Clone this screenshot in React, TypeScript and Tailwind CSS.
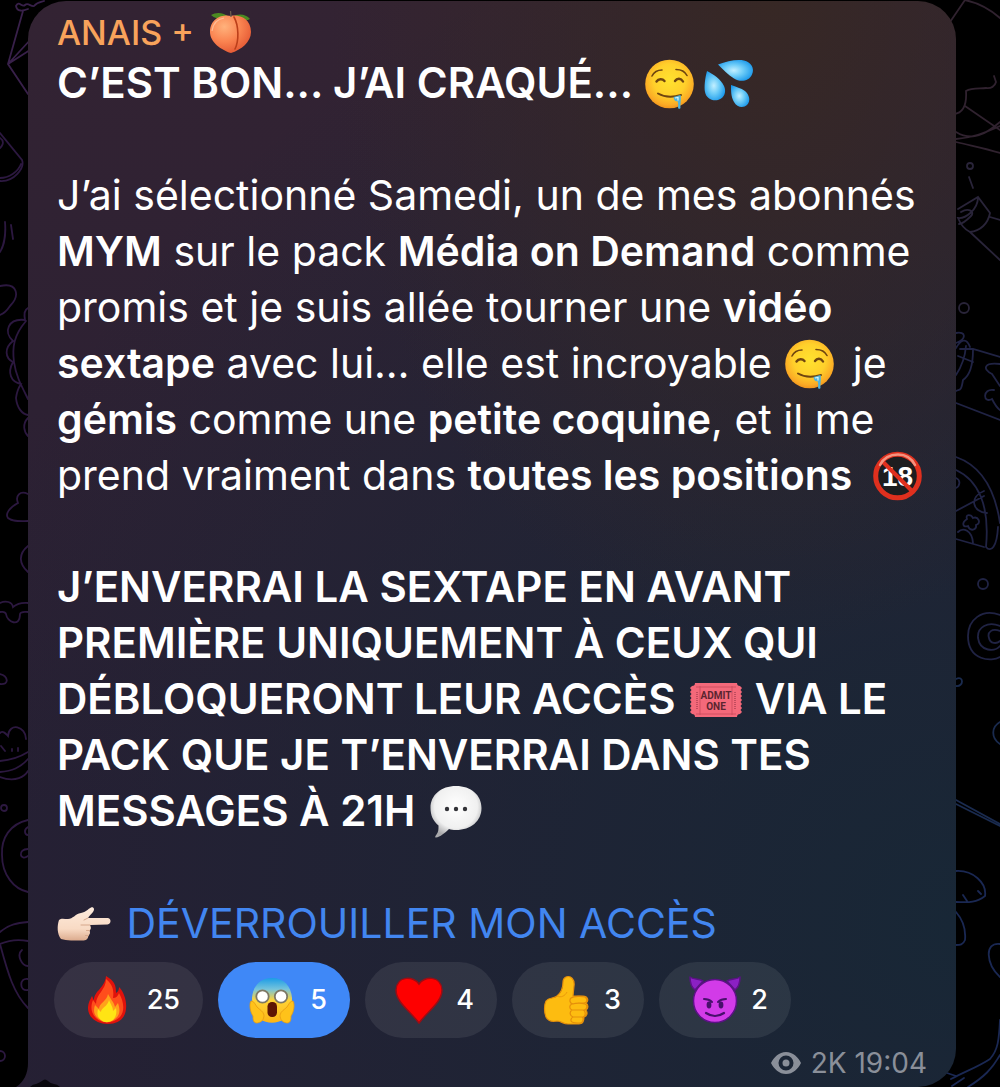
import type { ReactNode } from "react";

type IconProps = { className?: string };

const inlineEmoji = "inline-block h-[50px] w-[58px] align-[-11px]";

function Peach() {
  return (
    <svg role="img" aria-label="pêche" viewBox="0 0 43 43" className="h-[43px] w-[43px]">
      <defs>
        <radialGradient id="peach" cx="0.35" cy="0.3" r="0.8">
          <stop offset="0" stopColor="#ffb27c" />
          <stop offset="0.5" stopColor="#fa8350" />
          <stop offset="1" stopColor="#e0512f" />
        </radialGradient>
      </defs>
      <path d="M20 6C14 1 7 1 2 4c4 4 11 5 18 4zM23 6c6-4 14-3 18 2-5 3-12 3-18 1z" fill="#4c8a22" />
      <path d="M22 5C15 3 1 6 1 21c0 10 11 18 21 21 10-3 20-11 20-21C42 7 29 3 22 5z" fill="url(#peach)" />
      <path d="M25 6c5 9 5 24 1 32" fill="none" stroke="#bb3f1a" strokeWidth="1.600" strokeLinecap="round" />
      <path d="M21.500 0l.5 6" stroke="#6b5a4c" strokeWidth="1.300" />
      <path d="M3 20C4 12 9 8 15 7" fill="none" stroke="#ffd9bb" strokeWidth="1.200" opacity=".6" />
    </svg>
  );
}

function Drooling() {
  return (
    <svg role="img" aria-label="visage qui bave" viewBox="-2 0 58 50" className={inlineEmoji}>
      <defs>
        <radialGradient id="face" cx="0.5" cy="0.42" r="0.6">
          <stop offset="0" stopColor="#ffe22f" />
          <stop offset="0.55" stopColor="#ffd02b" />
          <stop offset="0.85" stopColor="#fbab25" />
          <stop offset="1" stopColor="#ee8f1c" />
        </radialGradient>
      </defs>
      <circle cx="24.500" cy="25" r="24.300" fill="url(#face)" />
      <g fill="none" stroke="#6f4510" strokeWidth="1.600" strokeLinecap="round">
        <path d="M7 17c2-4 6-6 10-6M31 10.500c5 0 9 2 11 6" />
        <path d="M11.500 22.500c2-3 6-3 8-.5M30 22c2-3 6-3 8 .5" strokeWidth="2.400" />
        <path d="M13 34.500c6 3.500 15 4 23 1.500" strokeWidth="2" />
      </g>
      <path d="M28.500 38l7-2c1 4-.5 8 0 13-1 1.500-2.500 1-2.500-1 .5-3 0-4-.5-6-1.500 1-3.500 0-4-4z" fill="#4fb4dc" />
      <path d="M30 39l3-.5v3" stroke="#d9f6ff" strokeWidth="1.200" fill="none" />
    </svg>
  );
}

function Droplets() {
  return (
    <svg role="img" aria-label="gouttes" viewBox="-4 0 58 50" className={inlineEmoji}>
      <defs>
        <radialGradient id="drop" cx="0.45" cy="0.5" r="0.6">
          <stop offset="0" stopColor="#c3efff" />
          <stop offset="0.45" stopColor="#6fcdf8" />
          <stop offset="1" stopColor="#1796ea" />
        </radialGradient>
      </defs>
      <g fill="url(#drop)">
        <path d="M13 5.500C22 2 32 0 39 1.500c7 1.500 11 8 8 14-3 7-12 8-18 4-6-3.500-11-9-16-14z" />
        <path d="M2 12c-2 7-3 16-2 21 1 6 7 9.500 13 8 7-2 8.500-9 6-14C16 20 8 15 2 12z" />
        <path d="M26 26c0 6 0 12 3 17 3 6 10 6 13 3 4-4 2.500-10-2-14-4-3-9-4-14-6z" />
      </g>
    </svg>
  );
}

function NoMinors() {
  return (
    <svg role="img" aria-label="interdit aux moins de 18 ans" viewBox="-9 0 58 50" className={inlineEmoji}>
      <circle cx="24.500" cy="25" r="21" fill="#1d1d1f" />
      <text x="24.500" y="35" textAnchor="middle" fontSize="28" fontWeight="700" fill="#fff" fontFamily="'Liberation Sans', sans-serif">18</text>
      <path d="M10 11l29 29" stroke="#e0301e" strokeWidth="4" />
      <circle cx="24.500" cy="25" r="21.800" fill="none" stroke="#e0301e" strokeWidth="5" />
      <path d="M7 14C11 6 19 3.500 25 3.500S38 6 42 14" fill="none" stroke="#f4937f" strokeWidth="2.500" strokeLinecap="round" />
    </svg>
  );
}

function Ticket() {
  return (
    <svg role="img" aria-label="ticket" viewBox="-4 0 58 50" className={inlineEmoji}>
      <path d="M5 8h42q0 3 3 3l2 2-1.500 2 1.500 2-1.500 2 1.500 2-1.500 2 1.500 2-1.500 2 1.500 2-1.500 2 1.500 2-1.500 2 1.500 2-2 2q-3 0-3 3H5q0-3-3-3l-2-2 1.500-2L0 33l1.500-2L0 29l1.500-2L0 25l1.500-2L0 21l1.500-2L0 17l1.500-2L0 13l2-2q3 0 3-3z" fill="#f4697a" />
      <path d="M10 11v29M42 11v29M6 12h40M6 39h40" stroke="#c84a5c" strokeWidth=".8" fill="none" />
      <path d="M7 17v17M45 17v17" stroke="#b04355" strokeWidth="1.500" strokeDasharray="1 1" />
      <g fill="#5b2530" fontFamily="Roboto, sans-serif" fontWeight="700" textAnchor="middle" fontSize="10">
        <text x="26" y="24">ADMIT</text>
        <text x="26" y="34.500">ONE</text>
      </g>
    </svg>
  );
}

function Speech() {
  return (
    <svg role="img" aria-label="bulle" viewBox="-4 0 58 52" className="inline-block h-[52px] w-[58px] align-[-12px]">
      <defs>
        <radialGradient id="speech" cx="0.5" cy="0.4" r="0.6">
          <stop offset="0" stopColor="#fff" />
          <stop offset="0.7" stopColor="#f0f0f0" />
          <stop offset="1" stopColor="#a9a9ab" />
        </radialGradient>
      </defs>
      <path d="M26 0c15 0 25.500 9 25.500 22S41 44 26 44c-3 0-5-.3-7-1-4 4-9 8-13 8.500-1.500 0-.5-2 .5-3 2-3 2-5 2-9C3 35 .5 29 .5 22 .5 9 11 0 26 0z" fill="url(#speech)" />
      <g fill="#333338">
        <circle cx="17" cy="23" r="2.200" />
        <circle cx="26" cy="23" r="2.200" />
        <circle cx="35" cy="23" r="2.200" />
      </g>
    </svg>
  );
}

function PointingHand() {
  return (
    <svg role="img" aria-label="doigt pointé" viewBox="0 0 58 50" className={inlineEmoji}>
      <defs>
        <linearGradient id="skin" x1="0" y1="0" x2="0" y2="1">
          <stop offset="0" stopColor="#fdebdc" />
          <stop offset="0.65" stopColor="#f8dac4" />
          <stop offset="1" stopColor="#dcab8e" />
        </linearGradient>
      </defs>
      <path d="M2 21c2-2 5-1 9-1 5 0 7-5 13-6 5-1 7-4 10-5.500 3-.8 4 2 2 4.500-1.500 2-4 4-5 6h19.500c4 0 4 6 0 6.500L33 26c1.500 3 1 4-.5 5.500 1 2 .5 4-1 5-.5 4-2.500 5-6 5H14c-4 0-7-1-10-1.500-4-5-4-13-2-19z" fill="url(#skin)" />
      <path d="M33 26h-9M32.500 31.500h-3M31.500 36.500h-3M31 19l-4 2" stroke="#d6a88c" strokeWidth="1" strokeLinecap="round" fill="none" />
    </svg>
  );
}

function Fire() {
  return (
    <svg aria-hidden="true" viewBox="0 0 48 50" className="h-[50px] w-12">
      <path d="M22 1c9 5 10 10 10 17 2-1 3-3 3-6 5 5 8 14 7 22-1 10-8 15-18 15S5 44 4 34c0-6 2-9 4-13 1 2 1 3 2 4 0-9 11-12 12-24z" fill="#e0120c" />
      <path d="M22 4c7 6 8 11 7 19 3 0 5-2 6-5 5 9 6 18 1 24-7 7-18 7-24 1-6-6-5-13-3-18l3 4c0-10 10-14 10-25z" fill="#ff4d1c" />
      <path d="M24 19c3 6 6 8 7 13l3-4c3 9 1 13-3 16-5 4-12 3-16 0-5-4-6-8-4-14l4 4c0-6 8-8 9-15z" fill="#ffa11b" />
      <path d="M25 25c2 5 4 7 4 11l3-3c1 5 0 9-3 12-4 3-9 3-12 0-4-3-4-7-3-11l3 3c0-4 7-6 8-12z" fill="#ffe414" />
    </svg>
  );
}

function Scream() {
  return (
    <svg aria-hidden="true" viewBox="0 0 48 50" className="h-[50px] w-12">
      <defs>
        <linearGradient id="scared" x1="0" y1="0" x2="0" y2="1">
          <stop offset="0" stopColor="#1c9ce6" />
          <stop offset="0.25" stopColor="#76c4dc" />
          <stop offset="0.5" stopColor="#ffd335" />
          <stop offset="1" stopColor="#fdb515" />
        </linearGradient>
      </defs>
      <path d="M24 3C12 3 5 11 4 23c0 10 3 17 8 21 7 5 17 5 24 0 5-4 8-11 8-21C43 11 36 3 24 3z" fill="url(#scared)" />
      <g fill="#fff" stroke="#7d7865" strokeWidth="1.800">
        <circle cx="14.500" cy="21.500" r="6.200" />
        <circle cx="33" cy="21.500" r="6.200" />
      </g>
      <rect x="19.500" y="27" width="9.500" height="15" rx="4.500" fill="#5e1503" />
      <path d="M3 26c3 0 4 3 6 6 3 3 6 4 7 8 0 5-3 8-8 8-3-1-3-4-3-7-3-4-4-12-2-15zM45 26c-3 0-4 3-6 6-3 3-6 4-7 8 0 5 3 8 8 8 3-1 3-4 3-7 3-4 4-12 2-15z" fill="#ffc21a" stroke="#e79a12" strokeWidth=".8" />
    </svg>
  );
}

function Heart() {
  return (
    <svg aria-hidden="true" viewBox="0 0 48 50" className="h-[50px] w-12">
      <path d="M24 9C19 1 2 0 1 15c0 12 14 21 23 33 9-12 23-21 23-33C46 0 29 1 24 9z" fill="#fe0000" stroke="#9c0d14" strokeWidth="1.500" />
    </svg>
  );
}

function ThumbUp() {
  return (
    <svg aria-hidden="true" viewBox="0 0 48 50" className="h-[50px] w-12">
      <g fill="#fdbc10" stroke="#e58f0b" strokeWidth="1.200" strokeLinejoin="round">
        <path d="M24 2c5-2 9 3 8 9l-1 10h10c5 0 6 5 3 7 3 2 2 6 0 7 2 3 1 6-2 7 0 4-1 7-5 7H26c-5 0-7-3-11-3-5 1-9 0-11-4C2 37 2 30 4 26c3-4 8-2 11-5 5-4 6-8 6-14 0-3 1-4 3-5z" />
        <path d="M29 23c3-2 11-2 14-1 3 2 2 6-1 6-4 0-8 0-11 1-3 0-4-4-2-6zM30 29c4-1 10-1 13 0 3 1 2 6-1 6H30c-3-1-3-5 0-6zM30 35h11c3 1 3 6 0 7H31c-3-1-4-5-1-7zM31 42h9c2 1 1 6-2 6-4 0-6 0-8-1-2-1-1-4 1-5z" />
      </g>
      <path d="M15 21c4 2 8 0 10-4" fill="none" stroke="#eb9a0c" strokeWidth="1" />
    </svg>
  );
}

function Devil() {
  return (
    <svg aria-hidden="true" viewBox="0 0 52 50" className="h-[50px] w-[52px]">
      <g stroke="#5c1186" strokeWidth="1.500" strokeLinejoin="round">
        <path d="M1 2c4 3 8 1 13 4l-8 9C2 12 1 6 1 2zM51 2c-4 3-8 1-13 4l8 9c4-3 5-9 5-13z" fill="#8b20c4" />
        <circle cx="26" cy="26" r="21.500" fill="#d23be8" />
      </g>
      <g stroke="#47106b" strokeLinecap="round" fill="none">
        <path d="M15 24c4 0 6 1 8 3M37 24c-4 0-6 1-8 3" strokeWidth="2" />
        <path d="M17 38c6 4 12 4 18 0" strokeWidth="2.200" />
      </g>
      <ellipse cx="20" cy="30" rx="2.400" ry="3.400" fill="#47106b" />
      <ellipse cx="32" cy="30" rx="2.400" ry="3.400" fill="#47106b" />
    </svg>
  );
}

function Eye({ className }: IconProps) {
  return (
    <svg aria-label="vues" role="img" viewBox="0 0 30 22" className={className}>
      <path fillRule="evenodd" fill="currentColor" d="M15 0c7 0 12 5 15 11-3 6-8 11-15 11S3 17 0 11C3 5 8 0 15 0zm0 3.500a7.500 7.500 0 1 0 0 15 7.500 7.500 0 0 0 0-15z" />
      <circle cx="15" cy="11" r="3.500" fill="currentColor" />
    </svg>
  );
}

function DoodlesLeft() {
  return (
    <svg aria-hidden="true" viewBox="0 0 60 1087" className="absolute top-0 left-0 h-[1087px] w-[60px]" fill="none" stroke="#2c1840" strokeWidth="1.800" strokeLinecap="round">
      <path d="M16 6c3-6 6 2 9-1s6 2 9 1c4-5 8-4 10-5M16 6c1 6 7 5 12 3M23 11L8 64l20 30M8 64l24-26M8 64l22-14" stroke="#38204a" />
      <path d="M0 133l22 27c3 8-8 22-22 21M0 138c6 4 1 9 0 10M21 164c-3 8-12 14-21 14" />
      <path d="M5 222c1 12-1 24-5 30M11 225l2 14M0 286c18-4 20 10 10 20-4 6-7 8-10 9" />
      <path d="M28 308c-4 2-4 6-3 12-17-2-22 12-12 21-9 7-8 17 0 21-6 11-2 20 8 22 0 0-4 6-5 14 1 10 6 16 12 17M26 321c-12 14-14 26-12 41 2 14 7 23 14 37M28 418c-6 6-4 14 0 18" />
      <path d="M28 494c-8-4-13 2-10 9-9 5-13 11-10 15 5 4 12 3 20 3M28 546c-10 8-9 18 0 26" />
      <path d="M0 603c6-3 12-1 13 4 6-5 11-4 15-4M0 612c3 0 5-1 6 2 1 8 14 14 14 0 1-3 5-2 8-2M0 674c8 2 10 11 0 10" />
      <path d="M0 733c3-3 6 1 8 3 1-14 18-10 18 3M0 761c12-1 20-4 28-9M0 772c12-1 20-4 28-13M0 777c16 6 25-1 28-6M1 746l4 5M12 749v2M18 748v3" />
      <circle cx="4" cy="808" r="3" />
      <path d="M28 820C10 824 1 838 2 855c0 20 12 34 26 37M28 827c-5 3-3 8 0 8M28 849c-11 0-8 13 0 7" />
      <path d="M0 932c9-8 18-9 28-10M0 944c9-4 18-5 28-3M0 944c8 30 14 50 28 64M22 950c-6 5 0 16 6 16M28 979c-9-2-9 13 0 11" />
      <circle cx="0" cy="1056" r="5" />
    </svg>
  );
}

function DoodlesRight() {
  return (
    <svg aria-hidden="true" viewBox="0 0 70 1087" className="absolute top-0 right-0 h-[1087px] w-[70px]" fill="none" strokeWidth="1.800" strokeLinecap="round">
      <g stroke="#30222f">
        <path d="M20 22L35 0c14 3 26 10 35 18M24 114c9-1 13-8 12-23 6-4 15-2 20-3 5 1 9-2 10-6l-2-6M35 106l35 24M26 132c16 10 30 2 44-10M26 142c16 4 28 6 44 11M26 139c16-1 28-6 44-13" />
      </g>
      <g stroke="#292439">
        <circle cx="40" cy="166" r="3" />
        <path d="M39 177l4 11" />
        <path d="M28 209l20-12 12 16c-2 11-10 18-20 19-6-3-10-9-12-14 7 1 20-8 20-21M60 217l10 3M40 232l30 28M31 212c8-5 14 0 10 4s-9 8-12 8" />
        <circle cx="34" cy="308" r="5" />
      </g>
      <g stroke="#202344">
        <path d="M26 333c10-2 11 6 0 10M26 348c4-7 10-12 14-1M30 349h13l27 8M43 350c0 16-4 26-10 30-2 12-3 9-7 11M36 346c-1 12-4 20-10 29M28 356l15 6M26 403l44 17M70 364c-16-2-18 5-8 10l8 12M64 390c-12-2-11 14-2 9 2 4 5 9 8 11" />
        <path d="M26 457c20 7 38 26 44 66M26 470c22 10 34 35 30 77 5 6 11 0 12-20M26 511l28-15M54 491c-15 6-12 21 3 22M26 539l28 8M28 532c5-5 14-2 15 11M26 478c5 2 4 8 0 10" />
        <path d="M37 519c-6 4-4 9 1 7 2 6 9 4 8-1 6-2 2-9-3-7-2-4-8-4-6 1z" />
        <circle cx="53" cy="584" r="5" />
        <path d="M70 615c-18-7-32 5-32 21 0 25 24 26 32 21M70 626c-12-5-23 1-22 12 2 14 17 14 22 8M70 631c-8-3-13 1-11 7 1 6 8 6 11 3" />
        <path d="M26 679c8-4 8 8 0 7M70 722c-9 5-9 16 0 22M26 800l44 24M26 804l44 22" stroke="#1a2b4f" />
        <path d="M26 871c17-1 31 12 29 25-10 8-20 6-29 6M37 901l-4-6M51 894l-3-3M26 912c7 8 10 18 9 28-2 5-5 5-9 5M70 944c-16-2-14 20 0 33M70 1020c-1 20-2 30-10 39-12 8-24 12-39 20M70 1055c-8 14-16 22-32 32M14 1072l12 4M34 1078l-12 8" stroke="#1a2853" />
      </g>
    </svg>
  );
}

function Line({ children }: { children: ReactNode }) {
  return <span className="block h-14 whitespace-nowrap">{children}</span>;
}

function B({ children }: { children: ReactNode }) {
  return <strong className="font-semibold">{children}</strong>;
}

const reactions = [
  { name: "feu", icon: <Fire />, count: 25, style: "w-[149px] bg-white/8" },
  { name: "choc", icon: <Scream />, count: 5, style: "w-[132px] bg-[#3f88f7]" },
  { name: "cœur", icon: <Heart />, count: 4, style: "w-[132px] bg-white/8" },
  { name: "pouce", icon: <ThumbUp />, count: 3, style: "w-[132px] bg-white/8" },
  { name: "diable", icon: <Devil />, count: 2, style: "w-[132px] bg-white/8" },
];

export default function App() {
  return (
    <main className="relative min-h-screen overflow-hidden bg-black pt-px pr-11 pl-7 font-['Inter',sans-serif] text-white">
      <DoodlesLeft />
      <DoodlesRight />
      <svg aria-hidden="true" viewBox="0 0 28 30" className="absolute bottom-0 left-[10px] h-[30px] w-7">
        <path d="M18 0h10v30H6C14 25 18 16 18 6z" fill="#271f33" />
      </svg>
      <article className="relative rounded-t-[38px] rounded-br-[38px] bg-[radial-gradient(ellipse_at_80%_0%,#372825_0%,transparent_42%),radial-gradient(ellipse_at_100%_85%,#182736_0%,transparent_80%),linear-gradient(180deg,#332333_0%,#271f33_75%)] px-[29px] pt-2 pb-2">
        <header className="flex h-[46px] items-center gap-[15px] text-[34px] font-medium text-[#f9a35b]">
          <span>ANAIS +</span>
          <Peach />
        </header>

        <div className="text-[41px] leading-[56px]">
          <p className="text-[42px] font-semibold">
            <Line>C’EST BON... J’AI CRAQUÉ... <Drooling /><Droplets /></Line>
          </p>
          <p className="mt-14">
            <Line>J’ai sélectionné Samedi, un de mes abonnés</Line>
            <Line><B>MYM</B> sur le pack <B>Média on Demand</B> comme</Line>
            <Line>promis et je suis allée tourner une <B>vidéo</B></Line>
            <Line><B>sextape</B> avec lui… elle est incroyable <Drooling /> je</Line>
            <Line><B>gémis</B> comme une <B>petite coquine</B>, et il me</Line>
            <Line>prend vraiment dans <B>toutes les positions</B> <NoMinors /></Line>
          </p>
          <p className="mt-14 text-[42px] font-semibold">
            <Line>J’ENVERRAI LA SEXTAPE EN AVANT</Line>
            <Line>PREMIÈRE UNIQUEMENT À CEUX QUI</Line>
            <Line>DÉBLOQUERONT LEUR ACCÈS <Ticket /> VIA LE</Line>
            <Line>PACK QUE JE T’ENVERRAI DANS TES</Line>
            <Line>MESSAGES À 21H <Speech /></Line>
          </p>
          <p className="mt-14">
            <Line><PointingHand /> <a href="#acces" className="text-[#4286f0]">DÉVERROUILLER MON ACCÈS</a></Line>
          </p>
        </div>

        <div className="mt-[11px] -ml-[3px] flex gap-[15px]">
          {reactions.map((r) => (
            <button
              key={r.name}
              type="button"
              aria-label={`${r.name} ${r.count}`}
              className={`flex h-[76px] items-center justify-between rounded-full pr-[23px] pl-[30px] text-[27px] font-medium ${r.style}`}
            >
              {r.icon}
              <span>{r.count}</span>
            </button>
          ))}
        </div>

        <footer className="mt-[9px] flex h-8 items-center justify-end gap-[10px] text-[28px] leading-8 text-[#8a8f99]">
          <Eye className="h-[22px] w-[30px]" />
          <span>2K 19:04</span>
        </footer>
      </article>
      <svg aria-hidden="true" viewBox="0 0 34 8" className="absolute bottom-0 left-[30px] h-2 w-[34px]">
        <path d="M0 8q3-3 6-3 3-1 6-3 3-3 6 0 3 3 6 3 3 0 6 3z" fill="#08060c" />
      </svg>
    </main>
  );
}
